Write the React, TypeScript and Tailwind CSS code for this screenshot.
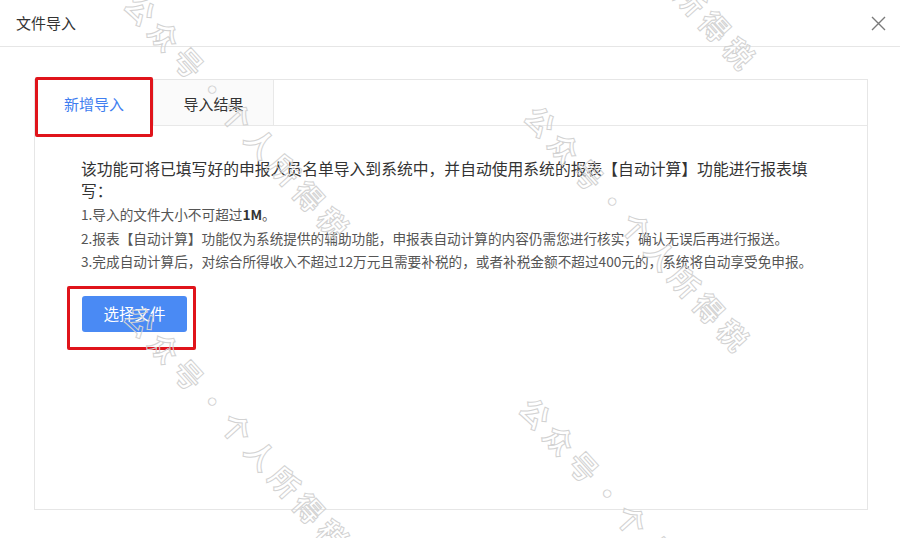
import React from "react";

const WM = "公众号·个人所得税";

function Watermark({ left, top }: { left: number; top: number }) {
  return (
    <div
      className="absolute whitespace-nowrap text-[29px] font-bold tracking-[7px] text-transparent [-webkit-text-stroke:1px_#d2d2d2] leading-none origin-top-left rotate-[48deg]"
      style={{ left, top }}
    >
      {WM}
    </div>
  );
}

export default function App() {
  return (
    <div className="relative w-[900px] h-[538px] bg-white overflow-hidden font-['Noto_Sans_CJK_SC','Microsoft_YaHei',sans-serif]">
      {/* header */}
      <div className="h-[47px] border-b border-[#e6e6e6] flex items-center justify-between pl-4 pr-[14px]">
        <span className="text-[15px] text-[#333]">文件导入</span>
        <svg width="15" height="15" viewBox="0 0 15 15" className="mt-[1px]">
          <path d="M1 1 L14 14 M14 1 L1 14" stroke="#7a7a7a" strokeWidth="1.4" fill="none" />
        </svg>
      </div>

      {/* body */}
      <div className="pt-[32px] pl-[34px] pr-[32px]">
        <div className="h-[431px] border border-[#e6e6e6] flex flex-col">
          {/* tabs */}
          <div className="h-[46px] flex border-b border-[#e8e8e8] shrink-0">
            <div className="w-[119px] h-[46px] bg-white flex items-center justify-center pt-[3px] text-[15px] text-[#3f7ef0] border-r border-[#e8e8e8]">
              新增导入
            </div>
            <div className="w-[120px] flex items-center justify-center pt-[3px] text-[15px] text-[#333] bg-[#fafafa] border-r border-[#e8e8e8]">
              导入结果
            </div>
            <div className="flex-1 bg-white" />
          </div>

          {/* content */}
          <div className="pl-[46px] pr-[52px] pt-[32px]">
            <p className="text-[15.8px] leading-[22px] text-[#333]">
              该功能可将已填写好的申报人员名单导入到系统中，并自动使用系统的报表【自动计算】功能进行报表填写：
            </p>
            <div className="mt-[1px] text-[13.65px] leading-[23.5px] text-[#555]">
              <p>
                1.导入的文件大小不可超过<span className="font-bold text-[#333]">1M</span>。
              </p>
              <p>2.报表【自动计算】功能仅为系统提供的辅助功能，申报表自动计算的内容仍需您进行核实，确认无误后再进行报送。</p>
              <p>3.完成自动计算后，对综合所得收入不超过12万元且需要补税的，或者补税金额不超过400元的，系统将自动享受免申报。</p>
            </div>
            <button className="mt-[22px] ml-[1px] w-[105px] h-[36px] rounded-[3px] bg-[#4a8af4] text-white text-[15.5px] flex items-center justify-center">
              选择文件
            </button>
          </div>
        </div>
      </div>

      {/* red annotation boxes */}
      <div className="absolute left-[35px] top-[77px] w-[118px] h-[60px] border-[3px] border-[#e0141b] rounded-[2px] pointer-events-none" />
      <div className="absolute left-[67px] top-[286px] w-[129px] h-[64px] border-[3px] border-[#e0141b] rounded-[2px] pointer-events-none" />

      {/* watermarks */}
      <div className="absolute inset-0 pointer-events-none">
        <Watermark left={142} top={-12} />
        <Watermark left={548} top={-182} />
        <Watermark left={542} top={100} />
        <Watermark left={142} top={300} />
        <Watermark left={537} top={392} />
      </div>
    </div>
  );
}
